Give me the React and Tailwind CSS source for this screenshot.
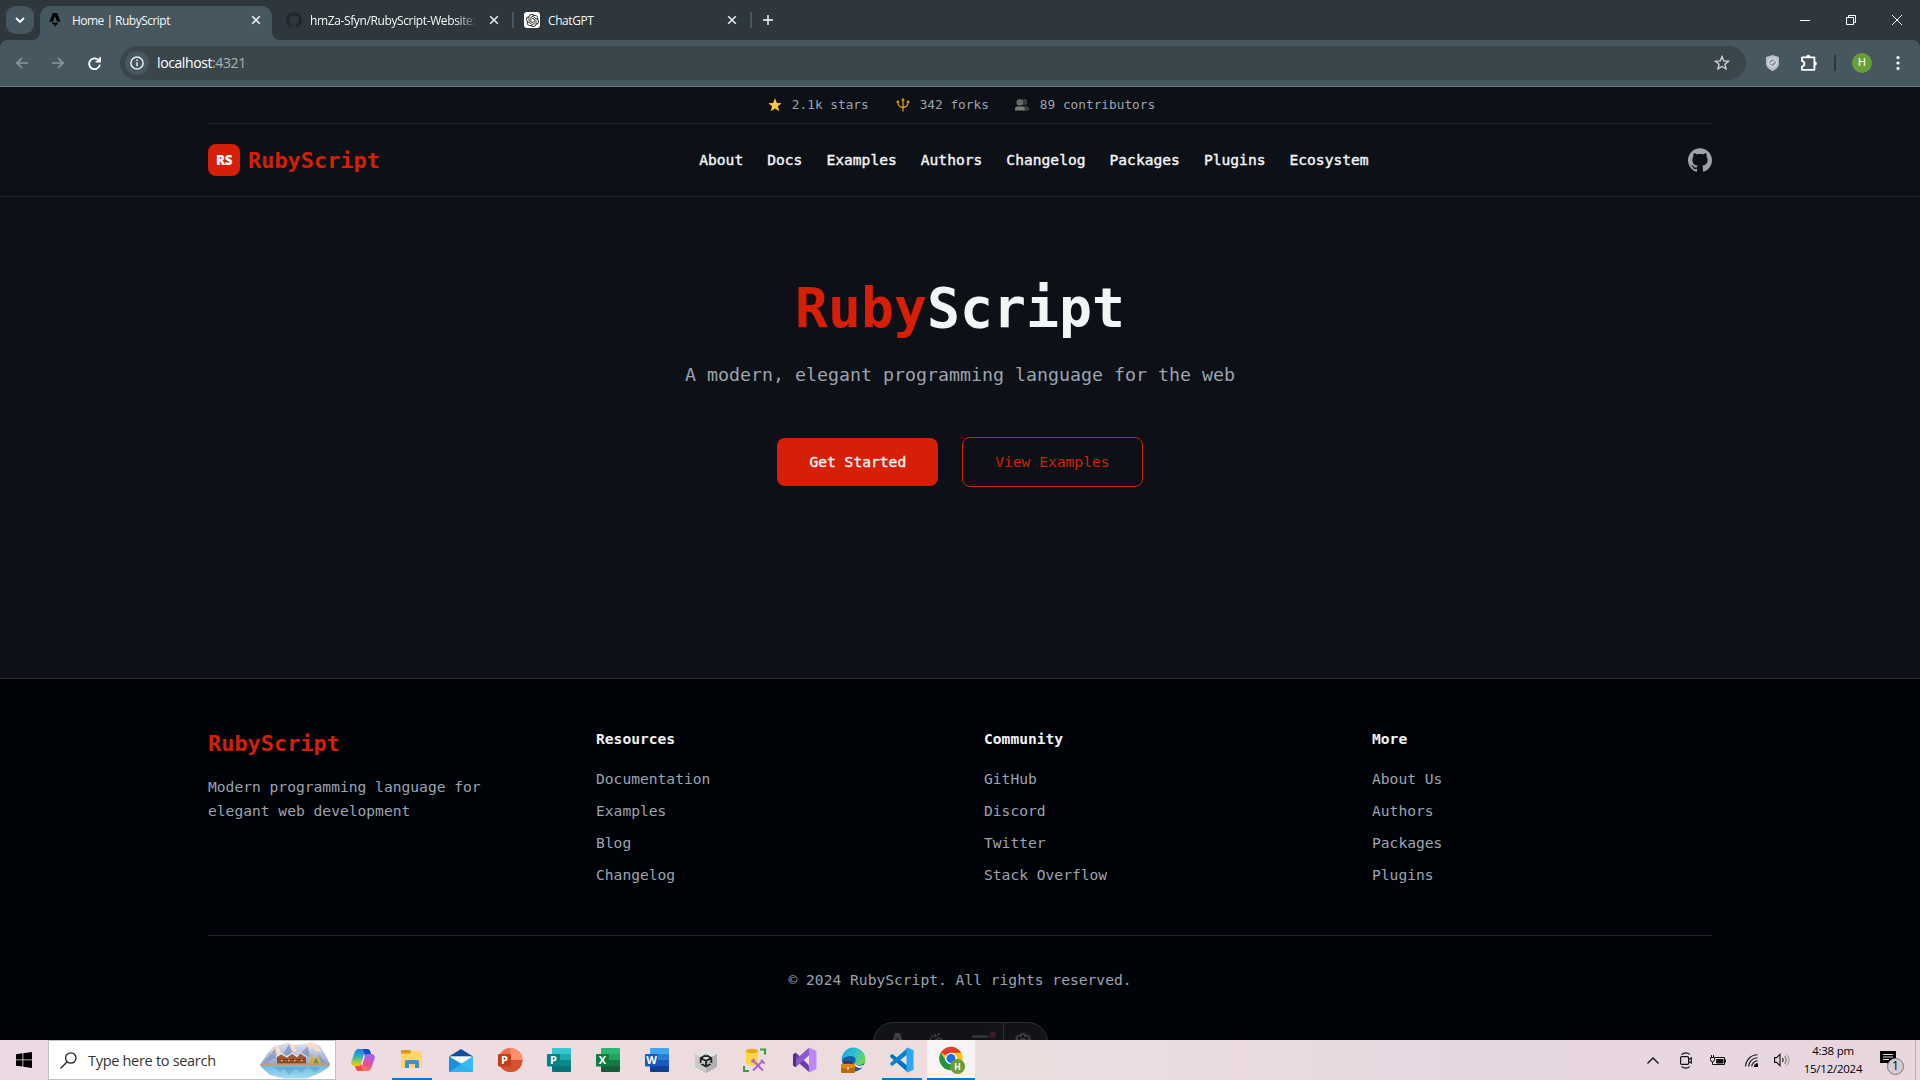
import React from "react";
import { SiAstro, SiGithub, SiOpenai } from "react-icons/si";

const mono = "font-['DejaVu_Sans_Mono',monospace]";
const medium = "[-webkit-text-stroke:0.4px_currentColor]";

function Close({ className }) {
  return (
    <svg className={className} width="10" height="10" viewBox="0 0 10 10" fill="none" stroke="#e6eaec" strokeWidth="1.6">
      <path d="M1.2 1.2 8.8 8.8M8.8 1.2 1.2 8.8" />
    </svg>
  );
}

function TabStrip() {
  return (
    <div className="flex h-[40px] shrink-0 items-end bg-[#2d373c] text-[12px] text-[#f3f6f7] font-['Open_Sans',sans-serif]">
      <div className="ml-[6px] mb-[6px] flex h-7 w-7 items-center justify-center rounded-[9px] bg-[#46575f]">
        <svg width="10" height="6" viewBox="0 0 10 6" fill="none" stroke="#fff" strokeWidth="1.8"><path d="M1 1l4 4 4-4" /></svg>
      </div>
      <svg className="-ml-[2px]" width="8" height="8" viewBox="0 0 8 8"><path d="M8 0v8H0a8 8 0 0 0 8-8z" fill="#46575f" /></svg>
      <div className="flex h-[34px] w-[232px] items-center rounded-t-[10px] bg-[#46575f] pb-[6px]">
        <SiAstro className="ml-2 text-black" size={14} />
        <span className="ml-[10px] mt-[2px] w-[170px] whitespace-nowrap text-[12px] tracking-[-0.52px]">Home | RubyScript</span>
        <Close className="ml-[9px]" />
      </div>
      <svg width="8" height="8" viewBox="0 0 8 8"><path d="M0 0v8h8a8 8 0 0 1-8-8z" fill="#46575f" /></svg>
      <div className="flex h-[34px] items-center pb-[6px]">
        <SiGithub className="ml-[6px] text-[#22272e]" size={16} />
        <span className="ml-[8px] mt-[1px] w-[168px] whitespace-nowrap tracking-[-0.38px] [mask-image:linear-gradient(to_right,#000_146px,transparent_168px)]">hmZa-Sfyn/RubyScript-Website:</span>
        <Close className="ml-[11px]" />
        <div className="ml-[13px] h-4 w-[2px] bg-[#46575f]" />
        <div className="ml-[10px] flex h-4 w-4 items-center justify-center rounded-[3px] bg-white text-[#222]"><SiOpenai size={13} /></div>
        <span className="ml-[8px] mt-[1px] w-[170px] tracking-[-0.42px]">ChatGPT</span>
        <Close className="ml-[9px]" />
        <div className="ml-[13px] h-4 w-[2px] bg-[#46575f]" />
        <svg className="ml-[11px]" width="10" height="10" viewBox="0 0 10 10" stroke="#fff" strokeWidth="1.4"><path d="M5 0v10M0 5h10" /></svg>
      </div>
      <div className="ml-auto flex h-10 items-center pr-[18px]">
        <svg width="10" height="10" viewBox="0 0 10 10" fill="none" stroke="#fff"><path d="M0 5.5h10" /></svg>
        <svg className="ml-9" width="10" height="10" viewBox="0 0 10 10" fill="none" stroke="#fff"><path d="M.5 2.5h7v7h-7zM2.5 2.5v-2h7v7h-2" /></svg>
        <svg className="ml-9" width="10" height="10" viewBox="0 0 10 10" fill="none" stroke="#fff"><path d="M0 0l10 10M10 0 0 10" /></svg>
      </div>
    </div>
  );
}

function AddressBar() {
  return (
    <div className="shrink-0 bg-[#2d373c]">
      <div className="flex h-[47px] items-center rounded-t-[8px] border-b border-[#6b797f] bg-[#46575f]">
        <svg className="ml-[16px]" width="12" height="12" viewBox="0 0 12 12" fill="none" stroke="#8c989d" strokeWidth="1.6"><path d="M12 6H1M6 1 1 6l5 5" /></svg>
        <svg className="ml-[24px]" width="12" height="12" viewBox="0 0 12 12" fill="none" stroke="#8c989d" strokeWidth="1.6"><path d="M0 6h11M6 1l5 5-5 5" /></svg>
        <svg className="ml-[24px]" width="13" height="13" viewBox="0 0 13 13" fill="none" stroke="#fff" strokeWidth="1.8">
          <path d="M11.3 4.2A5.4 5.4 0 1 0 11.9 7.6" /><path d="M12 .3v4.4H7.6" />
        </svg>
        <div className="ml-[19px] flex h-[34px] w-[1626px] items-center rounded-full bg-[#3a464c] pl-[5px] pr-[16px]">
          <div className="flex h-6 w-6 items-center justify-center rounded-full bg-[#46575f]">
            <svg width="14" height="14" viewBox="0 0 14 14" fill="none" stroke="#e9edef" strokeWidth="1.5"><circle cx="7" cy="7" r="6.1" /><path d="M7 6.2v4M7 3.6v1.5" /></svg>
          </div>
          <span className="-mt-px ml-[8px] text-[14px] tracking-[-0.4px] text-white font-['Open_Sans',sans-serif]">localhost<span className="text-[#a9b1b4]">:4321</span></span>
          <svg className="ml-auto" width="16" height="16" viewBox="0 0 16 16" fill="none" stroke="#cdd1d3" strokeWidth="1.4"><path d="M8 1.6l1.8 4.3 4.7.4-3.6 3 1.1 4.6L8 11.5l-4 2.4 1.1-4.6-3.6-3 4.7-.4z" /></svg>
        </div>
        <svg className="ml-[20px]" width="13" height="16" viewBox="0 0 13 16"><path d="M6.5 0 13 2v6c0 4-3 6.500-6.500 8C3 14.500 0 12 0 8V2z" fill="#b9bfcb" /><circle cx="6.500" cy="7.500" r="4" fill="#8e96a8" stroke="#eef0f4" strokeWidth="1" /><path d="M4.800 8.800 8 6" stroke="#eef0f4" strokeWidth="1.200" /></svg>
        <svg className="ml-[21px]" width="18" height="18" viewBox="0 0 18 18" fill="none" stroke="#fff" strokeWidth="1.800" strokeLinejoin="round"><path d="M2 3.300h12.400v12.600H2v-3.600c3.200-.2 3.200-5 0-5.200z" /><path d="M6.300 3a1.900 1.900 0 0 1 3.800 0zM14.700 7.600a1.900 1.900 0 0 1 0 3.800z" fill="#fff" strokeWidth=".5" /></svg>
        <div className="ml-[16px] h-4 w-[2px] bg-[#2d373c]" />
        <div className="ml-[16px] flex h-5 w-5 items-center justify-center rounded-full bg-[#689f38] text-[11px] text-white font-['Roboto',sans-serif]">H</div>
        <svg className="ml-[24px]" width="4" height="14" viewBox="0 0 4 14" fill="#fff"><circle cx="2" cy="1.600" r="1.600" /><circle cx="2" cy="7" r="1.600" /><circle cx="2" cy="12.400" r="1.600" /></svg>
      </div>
    </div>
  );
}

function Stat({ icon, children }) {
  return (
    <div className="flex items-center">
      <span className="flex w-[20px] justify-center">{icon}</span>
      <span className="ml-[7px] whitespace-nowrap">{children}</span>
    </div>
  );
}

const nav = ["About", "Docs", "Examples", "Authors", "Changelog", "Packages", "Plugins", "Ecosystem"];

function Header() {
  return (
    <header className="border-b border-[#1f2937]">
      <div className="mx-auto w-[1504px]">
        <div className="flex h-[37px] items-center justify-center gap-6 border-b border-[#1f2937] text-[12.78px] text-[#9ca3af]">
          <Stat icon={<svg width="14" height="14" viewBox="0 0 14 14"><path d="M7 .3l1.900 4.600 4.800.3-3.800 3.100 1.400 5L7 10.500l-4.300 2.800 1.400-5L.3 5.200l4.800-.3z" fill="#ffc83d" /></svg>}>2.1k stars</Stat>
          <Stat icon={<svg width="14" height="14" viewBox="0 0 14 14" fill="none" stroke="#f0a30a" strokeWidth="1.200"><path d="M7 1v12.600M1.800 3.500c0 4 1.500 5.800 5.200 5.800s5.200-1.800 5.200-5.800" /><path d="M.5 4.300 1.800 2.400l1.500 1.900zM5.700 2.200 7 .4l1.300 1.800zM10.700 4.300l1.500-1.900 1.300 1.900zM5.500 9.300h3" fill="#f0a30a" strokeWidth=".6" /></svg>}>342 forks</Stat>
          <Stat icon={<svg className="-ml-[2px]" width="14" height="13" viewBox="0 0 15 14"><circle cx="9.800" cy="4.300" r="3.400" fill="#3c3c3c" /><path d="M7 9h5c2 0 3 1 3 3v1.500H8z" fill="#3f3f3f" /><circle cx="5" cy="4.800" r="3.400" fill="#6e6e6e" /><path d="M3.500 4.200h.8M6 4.200h.8" stroke="#222" /><path d="M2.500 9.200h5c1.900 0 2.900 1 2.900 2.800v1.500H0V12c0-1.800.8-2.800 2.500-2.800z" fill="#7c7c7c" /></svg>}>89 contributors</Stat>
        </div>
        <div className="flex h-[72px] items-center justify-between">
          <div className="flex items-center gap-2">
            <div className="flex h-8 w-8 items-center justify-center rounded-lg bg-[#d71f07] text-[13.500px] font-extrabold tracking-[-0.5px] text-white font-['Open_Sans',sans-serif]">RS</div>
            <span className="mt-[2px] text-[21.92px] font-bold text-[#d71f07]">RubyScript</span>
          </div>
          <nav className="flex gap-6 text-[14.62px] text-[#f3f4f6]">
            {nav.map((n) => <a key={n} className={medium}>{n}</a>)}
          </nav>
          <SiGithub size={24} className="text-[#9ca3af]" />
        </div>
      </div>
    </header>
  );
}

function Hero() {
  return (
    <section className="flex h-[481px] flex-col items-center pt-20">
      <h1 className="pt-px text-[54.8px] font-bold leading-[60px] text-[#f3f4f6]"><span className="text-[#d71f07]">Ruby</span>Script</h1>
      <p className="mt-[23px] text-[18.27px] leading-7 text-[#9ca3af]">A modern, elegant programming language for the web</p>
      <div className="mt-12 flex items-center gap-6 text-[14.62px]">
        <a className={`flex h-12 items-center rounded-lg bg-[#d71f07] px-8 text-[#f3f4f6] ${medium}`}>Get Started</a>
        <a className="flex h-[50px] items-center rounded-lg border border-[#d71f07] px-8 text-[#d71f07]">View Examples</a>
      </div>
    </section>
  );
}

const columns = [
  ["Resources", ["Documentation", "Examples", "Blog", "Changelog"]],
  ["Community", ["GitHub", "Discord", "Twitter", "Stack Overflow"]],
  ["More", ["About Us", "Authors", "Packages", "Plugins"]],
];

function Footer() {
  return (
    <footer className="flex-1 border-t border-[#1f2937] bg-[#000308] pt-12 text-[14.62px] leading-6 text-[#9ca3af]">
      <div className="mx-auto w-[1504px]">
        <div className="grid grid-cols-4 gap-12 pb-12">
          <div>
            <div className="pt-px text-[21.92px] font-bold leading-8 text-[#d71f07]">RubyScript</div>
            <p className="mt-[15px]">Modern programming language for<br />elegant web development</p>
          </div>
          {columns.map(([title, items]) => (
            <div key={title}>
              <h3 className="font-bold text-[#f3f4f6]">{title}</h3>
              <ul className="mt-4 flex flex-col gap-2">{items.map((i) => <li key={i}>{i}</li>)}</ul>
            </div>
          ))}
        </div>
        <div className="border-t border-[#1f2937] pt-8 text-center">© 2024 RubyScript. All rights reserved.</div>
      </div>
    </footer>
  );
}

function DevToolbar() {
  return (
    <div className="absolute bottom-[-22px] left-[873px] flex h-10 w-[175px] items-start overflow-hidden rounded-full border border-[#2c2f35] bg-[#121318] text-[#3d3f44]">
      <svg className="ml-[17px] mt-[10px]" width="13" height="16" viewBox="0 0 13 16" fill="currentColor"><path d="M4 0h5l4 13-4-1.500L6.500 4 4 11.500 0 13z" /></svg>
      <svg className="ml-[25px] mt-[10px]" width="18" height="16" viewBox="0 0 18 16" fill="none" stroke="currentColor" strokeWidth="1.500"><path d="M1 5l4 10M5 8l5-3 6 4M6 1l1 3M10 0 9 3M2 4l3-1" /></svg>
      <svg className="ml-[25px] mt-[8px]" width="26" height="16" viewBox="0 0 26 16"><path d="M0 5.500h16M2 10h14" stroke="currentColor" strokeWidth="2" /><circle cx="20.500" cy="4" r="3.500" fill="#3b1a2c" /></svg>
      <div className="ml-[5px] h-full w-px bg-[#2c2f35]" />
      <svg className="ml-[10px] mt-[10px]" width="18" height="18" viewBox="0 0 18 18" fill="none" stroke="currentColor" strokeWidth="1.800"><path d="M7.500 1h3l.6 2.200 2.300-1 2.200 2.200-1 2.300 2.200.8v3l-2.200.6 1 2.300-2.200 2.200-2.300-1-.6 2.200h-3L6.900 14.600l-2.300 1-2.200-2.200 1-2.300L1.200 10.500v-3l2.200-.8-1-2.300 2.200-2.200 2.300 1z" /><circle cx="9" cy="9" r="3" /></svg>
    </div>
  );
}

/* Office tile: a product-coloured sheet with a darker lettered badge. */
function OfficeIcon({ letter, badge, shades, round }) {
  return (
    <svg width="26" height="26" viewBox="0 0 26 26">
      {round ? (
        <g>
          <circle cx="13.500" cy="13" r="12" fill={shades[0]} />
          <path d="M13.500 1a12 12 0 0 1 12 12h-12z" fill={shades[1]} />
          <path d="M1.500 13h24a12 12 0 0 1-24 0z" fill={shades[2]} />
        </g>
      ) : (
        <g>
          <path d="M6 2a1 1 0 0 1 1-1h17a1 1 0 0 1 1 1v5.500H6z" fill={shades[0]} />
          <path d="M6 7h19v6H6z" fill={shades[1]} />
          <path d="M6 13h19v6H6z" fill={shades[2]} />
          <path d="M6 19h19v5a1 1 0 0 1-1 1H7a1 1 0 0 1-1-1z" fill={shades[3]} />
        </g>
      )}
      <rect x="1" y="7" width="13" height="12.500" rx="1" fill={badge} />
      <text x="7.500" y="17.200" textAnchor="middle" fontSize="11" fontWeight="700" fill="#fff" fontFamily="Open Sans, sans-serif">{letter}</text>
    </svg>
  );
}

const Copilot = () => (
  <svg width="26" height="24" viewBox="0 0 26 24">
    <defs>
      <linearGradient id="cpa" x1="0" y1="0" x2="0" y2="1"><stop offset="0" stopColor="#1c7de8" /><stop offset=".45" stopColor="#2fb5b5" /><stop offset=".75" stopColor="#9bcf3c" /><stop offset="1" stopColor="#ffc21a" /></linearGradient>
      <linearGradient id="cpb" x1="0" y1="1" x2=".3" y2="0"><stop offset="0" stopColor="#ff8a3c" /><stop offset=".5" stopColor="#ee4f8e" /><stop offset="1" stopColor="#a85ff0" /></linearGradient>
    </defs>
    <path d="M14 1H8.500C6 1 5 3 4 6L1.500 13c-1 3 .5 5 3 5H8c2 0 3-1.500 3.500-3.500L14 6c.5-2 1.300-3 3-3h3c-.6-1.300-1.500-2-3-2z" fill="url(#cpa)" />
    <path d="M12 23h5.500c2.500 0 3.500-2 4.500-5l2.500-7c1-3-.5-5-3-5H18c-2 0-3 1.500-3.500 3.500L12 18c-.5 2-1.300 3-3 3H6c.6 1.300 1.500 2 3 2z" fill="url(#cpb)" />
    <path d="M13 1h4c2 0 3 1.300 3.600 3.200L21 6h-3c-1.600 0-2.500.8-3 2.300z" fill="#1548c4" />
    <path d="M13 23H9c-2 0-3-1.300-3.600-3.200L5 18h3c1.600 0 2.500-.8 3-2.300z" fill="#f4503a" />
  </svg>
);

const Explorer = () => (
  <svg width="22" height="20" viewBox="0 0 22 20">
    <path d="M0 1a1 1 0 0 1 1-1h8l1.500 2.500H0z" fill="#d99a12" /><path d="M0 3h9l1.500-2H20a1 1 0 0 1 1 1v16H0z" fill="#ffd667" />
    <path d="M0 1a1 1 0 0 1 1-1h8l1 1.500L9 3.500H0z" fill="#d99a12" />
    <path d="M4 18v-6.500a1.500 1.500 0 0 1 1.500-1.500h11a1.500 1.500 0 0 1 1.500 1.500V18h-4v-4H8v4z" fill="#3f8fd6" />
  </svg>
);

const Mail = () => (
  <svg width="24" height="23" viewBox="0 0 24 23">
    <path d="M0 7.500 12 0l12 7.500z" fill="#0f4f9c" /><path d="M2 7.500h20V15H2z" fill="#f4f6f8" />
    <path d="M0 7.500 12.500 14.500 24 7.500V23H0z" fill="#2fb6f0" /><path d="M0 7.500 24 23H0z" fill="#1d8fe0" /><path d="M24 7.500 0 23h24z" fill="#35bdf2" opacity=".75" />
  </svg>
);

const Unity = () => (
  <svg width="22" height="25" viewBox="0 0 22 25">
    <path d="M11 0l11 6v13l-11 6L0 19V6z" fill="#c9c9c9" /><path d="M11 0l11 6-11 6.500L0 6z" fill="#e2e2e2" /><path d="M22 6v13l-11 6V12.500z" fill="#b1b1b1" />
    <path d="M11 7 16.300 10v5.500L11 18.500 5.700 15.500V10zM11 12.800v5.500M11 12.800 5.700 10M11 12.800l5.300-2.800" fill="none" stroke="#222" strokeWidth="1.800" />
    <path d="M11 4.500v3M4.500 16.500 7 15M17.500 16.500 15 15" stroke="#d8d8d8" strokeWidth="1.200" />
  </svg>
);

const SqlTools = () => (
  <svg width="24" height="25" viewBox="0 0 24 25">
    <path d="M17 1.500h5v5M1 18v5h5" fill="none" stroke="#37a047" strokeWidth="2.200" />
    <path d="M3 3v12c0 1.500 2.500 2.500 6 2.500s6-1 6-2.500V3z" fill="#fbd63e" /><ellipse cx="9" cy="3" rx="6" ry="2.200" fill="#e8a917" />
    <path d="M10.500 13 20 22.500M20 12.500l-10 10M8.500 14l3-3M18 12l3.500 3.500" stroke="#b05fd0" strokeWidth="2" />
  </svg>
);

const VisualStudio = () => (
  <svg width="25" height="26" viewBox="0 0 25 26">
    <path d="M1 7.500 4 5.800l12.500 12L18 25l-1.500-.5L4.500 14 4 20 1 18.500z" fill="#6a3fa8" /><path d="M1 18.500 4 20 17.500 8V1L16 1.500 1 15z" fill="#8a5bd0" />
    <path d="M1 7.500 4 5.800V20l-3-1.500z" fill="#52307c" /><path d="M17 .5 24.500 4v18L17 25.500z" fill="#bd87f7" />
  </svg>
);

const Edge = () => (
  <svg width="26" height="27" viewBox="0 0 26 27">
    <defs><linearGradient id="edg" x1="0" x2="1" y1="0" y2=".5"><stop offset="0" stopColor="#1d9be0" /><stop offset=".6" stopColor="#2fc3c9" /><stop offset="1" stopColor="#6bd655" /></linearGradient></defs>
    <circle cx="13.500" cy="13" r="11.500" fill="#155fb0" /><path d="M1.500 13C2 5 7.500.5 13.500.5S25.500 5.500 25.500 12c0 4-3 6-6.500 6s-4.500-1.500-4-3c1.500-2 .5-6-4-6-4 0-7.500 2-9.500 4z" fill="url(#edg)" />
    <path d="M14.500 15.500c.5 2.500 4.500 4.500 9 2.500l1 .5c-1 1.500-2.500 2.500-4 2.500-4 0-7-2.500-6-5.500z" fill="#efdedf" />
    <path d="M5 17v-2h6v2" fill="none" stroke="#5a2f06" strokeWidth="1.500" /><rect x="1" y="17" width="14" height="9" rx="1" fill="#b96a12" /><path d="M1 17h14v4H1z" fill="#d9881c" /><rect x="7" y="20" width="2" height="2.500" fill="#ffd667" />
  </svg>
);

const VsCode = () => (
  <svg className="-ml-[2px]" width="25" height="26" viewBox="0 0 25 25">
    <path d="M1 8.300 3.200 6.500 19 18.500V25L1.600 9.800z" fill="#0073bd" /><path d="M1 16.700l2.200 1.800L19 6.500V0L1.600 15.200z" fill="#0a84cf" /><path d="M18.500 0 24.500 2.800v19.400L18.500 25l-1-1V1z" fill="#2ba6f0" />
  </svg>
);

const Chrome = () => (
  <svg className="ml-[4px] mt-[2px]" width="28" height="30" viewBox="0 0 28 30">
    <circle cx="12" cy="12.500" r="11.700" fill="#fbc116" />
    <path d="M12 12.500 1.900 6.600A11.700 11.700 0 0 1 22.100 6.700H12z" fill="#e33b2e" />
    <path d="M12 24.200A11.700 11.700 0 0 1 1.900 6.600L7 15.300l5 2.700z" fill="#229342" /><path d="M12 24.200l5-9-5-2.700-5 2.800z" fill="#229342" />
    <circle cx="12" cy="12.500" r="5.800" fill="#fff" /><circle cx="12" cy="12.500" r="4.500" fill="#1a6ee8" />
    <circle cx="18.500" cy="20.500" r="7.600" fill="#689f38" />
    <text x="18.500" y="23.600" textAnchor="middle" fontSize="8.500" fontWeight="700" fill="#fff" fontFamily="Roboto, sans-serif">H</text>
  </svg>
);

const apps = [
  { el: <Copilot /> },
  { el: <Explorer />, open: true },
  { el: <Mail /> },
  { el: <OfficeIcon letter="P" badge="#c43e1c" shades={["#ed6c47", "#ff8f6b", "#d35230"]} round /> },
  { el: <OfficeIcon letter="P" badge="#058285" shades={["#37c6d0", "#1fabb0", "#098a8d", "#067377"]} /> },
  { el: <OfficeIcon letter="X" badge="#107c41" shades={["#2bb673", "#21a366", "#107c41", "#185c37"]} /> },
  { el: <OfficeIcon letter="W" badge="#185abd" shades={["#41a5ee", "#2b7cd3", "#185abd", "#103f91"]} /> },
  { el: <Unity /> },
  { el: <SqlTools /> },
  { el: <VisualStudio /> },
  { el: <Edge /> },
  { el: <VsCode />, open: true },
  { el: <Chrome />, active: true },
];

function SearchScene() {
  return (
    <svg width="70" height="37" viewBox="0 0 70 37">
      <defs>
        <clipPath id="sc"><path d="M0 23 7 12 14 4 20 3 28 1 34 3 44 2 52 0 60 4 66 14 70 22 69 25 60 31 47 36.500H24L10 33 1 25z" /></clipPath>
        <linearGradient id="lake" x1="0" x2="0" y1="0" y2="1"><stop offset="0" stopColor="#6db9e3" /><stop offset="1" stopColor="#a5def2" /></linearGradient>
        <linearGradient id="peak" x1="0" x2="0" y1="0" y2="1"><stop offset="0" stopColor="#dfe3ee" /><stop offset="1" stopColor="#8ea4cf" /></linearGradient>
      </defs>
      <g clipPath="url(#sc)">
        <path d="M0 0h70v23H0z" fill="url(#peak)" />
        <path d="M14 4l4-1 3 8-5 3-6-2zM30 1l4 2 3 8-6-3zM46 1l7-1 9 10-6-1-4-4-4 5z" fill="#fbdcc4" />
        <path d="M3 22 15 6l2 9zM22 14 29 2l4 10zM40 12 48 4l2 11zM58 12l8 9h-8z" fill="#7d93c2" opacity=".75" />
        <path d="M17 15l5-3 5 3v-1l5-3 5 3 3-4 6 4v8H17z" fill="#9c5a34" />
        <path d="M16 14.500l5-3 6 3.500 5-4 5 3.500 3-4 6 4" fill="none" stroke="#dfe7f2" strokeWidth="1.300" />
        <path d="M17 17.500h29M17 20h29" stroke="#6f3a20" strokeWidth=".8" />
        <path d="M21 18.500h1.500M28 18.500h1.500M34 18.500h1.500M41 18.500h1.500" stroke="#ffc765" strokeWidth="1.500" />
        <path d="M49 21.500l3-10 3 10zM56 21.500l2.500-8 2.500 8z" fill="#dfae28" /><path d="M53 21.500l3-6 3 6z" fill="#768e36" />
        <path d="M0 21.500h70v2.500H0z" fill="#c9966d" /><path d="M0 23.500h70V37H0z" fill="url(#lake)" />
        <path d="M14 25h34l-7 6-5-4-7 6-5-6-4 3zM49 25h12l-6 6z" fill="#4c92bf" opacity=".4" />
      </g>
    </svg>
  );
}

function Taskbar() {
  return (
    <div className="flex h-10 shrink-0 bg-[linear-gradient(90deg,#ebdae5_0%,#eddde3_18%,#ecdcdc_40%,#eddee1_55%,#e6d6e0_78%,#e9d6df_100%)] text-black font-['Open_Sans',sans-serif]">
      <div className="flex w-12 items-center justify-center">
        <svg width="16" height="16" viewBox="0 0 16 16"><path d="M0 2.200 6.500 1.300v6.200H0zM7.300 1.200 16 0v7.500H7.300zM0 8.300h6.500v6.300L0 13.700zM7.300 8.300H16V16l-8.700-1.200z" /></svg>
      </div>
      <div className="flex w-[288px] items-center border border-[#c4bfc4] bg-white">
        <svg className="ml-[11px]" width="17" height="17" viewBox="0 0 17 17" fill="none" stroke="#222" strokeWidth="1.300"><circle cx="10.800" cy="6" r="5.200" /><path d="M7.200 9.800.5 16.500" /></svg>
        <span className="ml-[11px] mt-[2px] whitespace-nowrap text-[14.500px] tracking-[-0.3px] text-[#333]">Type here to search</span>
        <div className="ml-auto mr-[5px]"><SearchScene /></div>
      </div>
      <div className="ml-[3px] flex gap-px">
        {apps.map((a, i) => (
          <div key={i} className={`relative flex w-12 items-center justify-center ${a.active ? "bg-[#f9f4f4]" : ""}`}>
            {a.el}
            {a.open && <div className="absolute bottom-0 left-1 h-[2px] w-10 bg-[#0078d7]" />}
            {a.active && <div className="absolute bottom-0 left-0 h-[2px] w-12 bg-[#0078d7]" />}
          </div>
        ))}
      </div>
      <div className="ml-auto flex items-center">
        <svg width="12" height="7" viewBox="0 0 12 7" fill="none" stroke="#111" strokeWidth="1.300"><path d="M.5 6.500 6 1l5.500 5.500" /></svg>
        <svg className="ml-[21px]" width="12" height="17" viewBox="0 0 12 17" fill="none" stroke="#111" strokeWidth="1.200"><rect x=".6" y="4.600" width="8" height="7.800" rx="1.200" /><path d="M8.600 7.500 11.300 6v5L8.600 9.500M1.500 2.400C4 .5 7.500.5 9.800 2.400M1.500 14.600c2.500 1.900 6 1.900 8.300 0" /></svg>
        <svg className="ml-[18px]" width="16" height="13" viewBox="0 0 16 13" fill="none" stroke="#111"><path d="M5 3.500h9.500v7H4.500M15.500 5.500v3" /><path d="M6.500 5.500h6.500v3.500H6.500z" fill="#111" /><path d="M.5 3.500h4v2.300a2 2 0 0 1-4 0zM1.500 3.500V1M3.500 3.500V1M2.500 8v2.500h3" /></svg>
        <svg className="ml-[19px]" width="13" height="13" viewBox="0 0 13 13" fill="none" stroke="#111" strokeWidth="1.100"><path d="M.6 12.500A12 12 0 0 1 12.500.8M3.600 12.500a9 9 0 0 1 8.900-8.700M6.700 12.500a6 6 0 0 1 5.800-5.700" /><path d="M9.500 12.500a3 3 0 0 1 3-2.700v2.700z" fill="#111" /></svg>
        <svg className="ml-[16px]" width="17" height="14" viewBox="0 0 17 14" fill="none" stroke="#111" strokeWidth="1.100"><path d="M.6 4.600h2L6 1.300v11.400L2.600 9.400h-2z" /><path d="M8.500 5c.9 1.200.9 2.800 0 4" /><path d="M10.600 3.200c2 2.300 2 5.300 0 7.600" stroke="#777" /><path d="M12.800 1.500c2.900 3.400 2.900 7.600 0 11" stroke="#a59ba1" /></svg>
        <div className="-mt-px ml-[12px] flex w-[60px] flex-col items-center whitespace-nowrap text-[11.500px] leading-[17.500px] tracking-[-0.25px]"><span>4:38 pm</span><span>15/12/2024</span></div>
        <div className="relative ml-[17px] mt-[5px] h-6 w-6">
          <svg width="16" height="16" viewBox="0 0 16 16"><path d="M0 0h16v12h-5.500v3.500L7 12H0z" fill="#000" /><path d="M3 3.500h10M3 6h10M3 8.500h6" stroke="#e6d6e0" strokeWidth="1.200" /></svg>
          <div className="absolute left-[7px] top-[7px] flex h-[17px] w-[17px] items-center justify-center rounded-full border border-[#777] bg-[#d5cbd0] text-[12px]">1</div>
        </div>
        <div className="ml-[11px] mr-[4px] h-10 w-px bg-[#b9adb5]" />
      </div>
    </div>
  );
}

export default function App() {
  return (
    <div className="flex h-[1080px] w-[1920px] flex-col overflow-hidden">
      <TabStrip />
      <AddressBar />
      <main className={`relative flex flex-1 flex-col overflow-hidden bg-[#0d1017] ${mono}`}>
        <Header />
        <Hero />
        <Footer />
        <DevToolbar />
      </main>
      <Taskbar />
    </div>
  );
}
